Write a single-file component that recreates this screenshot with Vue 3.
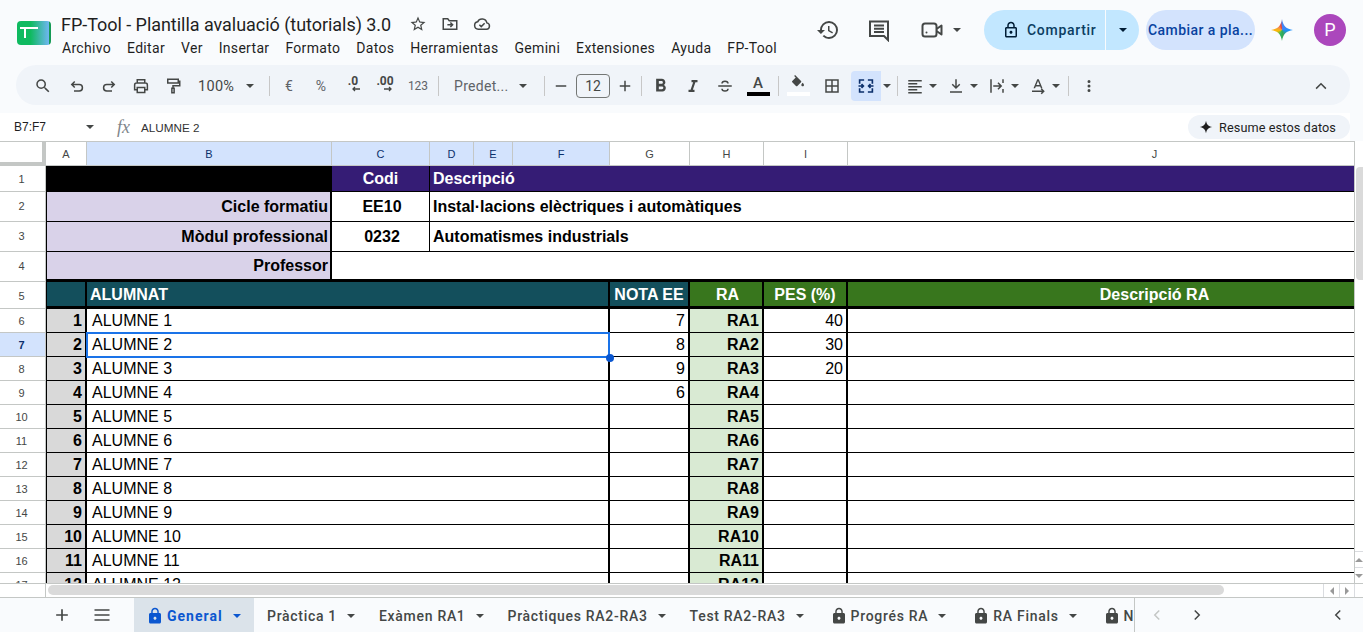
<script setup>
const menus = ["Archivo", "Editar", "Ver", "Insertar", "Formato", "Datos", "Herramientas", "Gemini", "Extensiones", "Ayuda", "FP-Tool"];
const columns = [
	{ name: "A", sel: false },
	{ name: "B", sel: true },
	{ name: "C", sel: true },
	{ name: "D", sel: true },
	{ name: "E", sel: true },
	{ name: "F", sel: true },
	{ name: "G", sel: false },
	{ name: "H", sel: false },
	{ name: "I", sel: false },
	{ name: "J", sel: false },
];
const notes = [7, 8, 9, 6];
const weights = [40, 30, 20];
const students = Array.from({ length: 12 }, (_, i) => ({
	row: i + 6,
	num: i + 1,
	name: "ALUMNE " + (i + 1),
	nota: notes[i] ?? "",
	ra: "RA" + (i + 1),
	pes: weights[i] ?? "",
}));
const tabs = [
	{ name: "Pràctica 1", lock: false },
	{ name: "Exàmen RA1", lock: false },
	{ name: "Pràctiques RA2-RA3", lock: false },
	{ name: "Test RA2-RA3", lock: false },
	{ name: "Progrés RA", lock: true },
	{ name: "RA Finals", lock: true },
	{ name: "Notes", lock: true },
];
</script>

<template>
	<div class="app">
		<svg class="sprite" aria-hidden="true">
			<symbol id="i-search" viewBox="0 0 24 24"><path fill="#444746" d="M15.5 14h-.79l-.28-.27A6.47 6.47 0 0 0 16 9.5 6.5 6.5 0 1 0 9.5 16c1.61 0 3.09-.59 4.23-1.57l.27.28v.79l5 4.99L20.49 19l-4.99-5zm-6 0C7.01 14 5 11.99 5 9.5S7.01 5 9.5 5 14 7.01 14 9.5 11.99 14 9.5 14z" /></symbol>
			<symbol id="i-undo" viewBox="0 0 24 24"><path fill="none" stroke="#444746" stroke-width="2" d="M9 6 5 10l4 4M5 10h10a4.2 4.2 0 0 1 0 8.500H8" /></symbol>
			<symbol id="i-redo" viewBox="0 0 24 24"><path fill="none" stroke="#444746" stroke-width="2" d="m15 6 4 4-4 4m4-4H9a4.2 4.2 0 0 0 0 8.500h7" /></symbol>
			<symbol id="i-print" viewBox="0 0 24 24"><path fill="none" stroke="#444746" stroke-width="2" d="M7 8V3.500h10V8M7 17H3.500v-6.500A2.500 2.500 0 0 1 6 8h12a2.500 2.500 0 0 1 2.500 2.500V17H17M7 14h10v6.500H7z" /></symbol>
			<symbol id="i-paint" viewBox="0 0 24 24"><path fill="none" stroke="#444746" stroke-width="2" d="M5 3h14v5H5zM19 5.500h2V11.500H12V15M10.500 15h3v6h-3z" /></symbol>
			<symbol id="i-minus" viewBox="0 0 24 24"><path fill="#444746" d="M5 11h14v2H5z" /></symbol>
			<symbol id="i-plus" viewBox="0 0 24 24"><path fill="#444746" d="M19 13h-6v6h-2v-6H5v-2h6V5h2v6h6z" /></symbol>
			<symbol id="i-bold" viewBox="2.400 2 20 20"><path fill="#444746" d="M15.600 10.790c.97-.67 1.650-1.770 1.650-2.790 0-2.260-1.750-4-4-4H7v14h7.040c2.090 0 3.710-1.700 3.710-3.790 0-1.520-.86-2.820-2.150-3.420zM10 6.500h3c.83 0 1.500.67 1.500 1.500s-.67 1.500-1.500 1.500h-3v-3zm3.500 9H10v-3h3.500c.83 0 1.500.67 1.500 1.500s-.67 1.500-1.500 1.500z" /></symbol>
			<symbol id="i-italic" viewBox="0 0 24 24"><path fill="#444746" d="M10 4v3h2.210l-3.420 10H6v3h8v-3h-2.210l3.420-10H18V4z" /></symbol>
			<symbol id="i-strike" viewBox="0 0 24 24"><path fill="none" stroke="#444746" stroke-width="2" d="M3 12h18M8 8.500C8 6.500 10 5.500 12 5.500s4 1 4 3M8 15.500c0 2 2 3 4 3s4-1 4-3" /></symbol>
			<symbol id="i-fill" viewBox="0 0 24 24"><path fill="#444746" d="M16.560 8.940 7.620 0 6.210 1.410l2.380 2.380-5.150 5.150a1.490 1.490 0 0 0 0 2.120l5.500 5.500c.29.290.68.440 1.060.44s.77-.15 1.060-.44l5.500-5.500c.59-.58.59-1.530 0-2.120zM19 11.500s-2 2.170-2 3.500c0 1.100.9 2 2 2s2-.9 2-2c0-1.330-2-3.500-2-3.500z" /></symbol>
			<symbol id="i-borders" viewBox="0 0 24 24"><path fill="none" stroke="#444746" stroke-width="2" d="M4 4h16v16H4zM12 4v16M4 12h16" /></symbol>
			<symbol id="i-merge" viewBox="0 0 24 24"><path fill="none" stroke="#0b2f6b" stroke-width="2.200" d="M9.500 4H3.500v5M14.500 4h6v5M9.500 20H3.500v-5M14.500 20h6v-5M2 12h6.500M6 9.500 8.500 12 6 14.500M22 12h-6.500M18 9.500 15.500 12l2.500 2.500" /></symbol>
			<symbol id="i-align" viewBox="0 0 24 24"><path fill="#444746" d="M3 4h18v2H3zM3 8h12v2H3zM3 12h18v2H3zM3 16h12v2H3zM3 20h18v2H3z" /></symbol>
			<symbol id="i-valign" viewBox="0 0 24 24"><path fill="#444746" d="M4 19h16v2H4zM11 3h2v9.200l3.300-3.300 1.400 1.400-5.700 5.700-5.700-5.700 1.400-1.400 3.300 3.300z" /></symbol>
			<symbol id="i-wrap" viewBox="0 0 24 24"><path fill="#444746" d="M3 3h2v18H3zM19 3h2v5h-2zM19 16h2v5h-2zM7 11h8.200l-2.600-2.600L14 7l5 5-5 5-1.400-1.400 2.600-2.600H7z" /></symbol>
			<symbol id="i-rotate" viewBox="0 0 24 24"><path fill="#444746" d="M11 3h2l5 12h-2.100l-1-2.500H9.100l-1 2.500H6zm-1.200 7.700h4.400L12 5.400zM4 18h13.200l-1.600-1.600L17 15l4 4-4 4-1.400-1.400 1.600-1.600H4z" /></symbol>
			<symbol id="i-more" viewBox="0 0 24 24"><path fill="#444746" d="M12 8a2 2 0 1 0 0-4 2 2 0 0 0 0 4zm0 2a2 2 0 1 0 0 4 2 2 0 0 0 0-4zm0 6a2 2 0 1 0 0 4 2 2 0 0 0 0-4z" /></symbol>
			<symbol id="i-up" viewBox="0 0 24 24"><path fill="none" stroke="#444746" stroke-width="2" d="m5.500 15.500 6.500-6.500 6.500 6.500" /></symbol>
			<symbol id="i-lock" viewBox="0 0 24 24"><path d="M18 8h-1V6c0-2.760-2.240-5-5-5S7 3.240 7 6v2H6c-1.100 0-2 .9-2 2v10c0 1.100.9 2 2 2h12c1.100 0 2-.9 2-2V10c0-1.100-.9-2-2-2zm-6 9c-1.100 0-2-.9-2-2s.9-2 2-2 2 .9 2 2-.9 2-2 2zm3.100-9H8.900V6c0-1.710 1.390-3.100 3.100-3.100 1.710 0 3.100 1.390 3.100 3.100v2z" /></symbol>
		</svg>

		<!-- cabecera -->
		<header class="top">
			<svg class="logo" viewBox="0 0 34 24">
				<defs>
					<linearGradient id="logo-g" x1="0" x2="1" y1="0" y2="0">
						<stop offset="0.4" stop-color="#0fba60" />
						<stop offset="0.94" stop-color="#6fb6f2" />
						<stop offset="0.95" stop-color="#159a55" />
					</linearGradient>
				</defs>
				<rect width="34" height="24" rx="4" fill="url(#logo-g)" />
				<path d="M3 7h18M8 7v10" stroke="#fff" stroke-width="2" fill="none" />
			</svg>
			<div class="doc">
				<div class="doc-title">
					<span class="doc-name">FP-Tool - Plantilla avaluació (tutorials) 3.0</span>
					<svg class="doc-ic" viewBox="0 0 24 24"><path fill="#444746" d="M22 9.240l-7.190-.62L12 2 9.190 8.630 2 9.240l5.460 4.730L5.820 21 12 17.270 18.180 21l-1.630-7.030L22 9.240zM12 15.400l-3.760 2.270 1-4.280-3.320-2.880 4.380-.38L12 6.100l1.710 4.040 4.380.38-3.320 2.880 1 4.280L12 15.400z" /></svg>
					<svg class="doc-ic" viewBox="0 0 24 24"><path fill="none" stroke="#444746" stroke-width="2" d="M3 19V5h6l2 2.500h10V19zM8.500 13h7M12.500 10l3 3-3 3" /></svg>
					<svg class="doc-ic" viewBox="0 0 24 24"><path fill="none" stroke="#444746" stroke-width="2" d="M7 19a5 5 0 0 1-.8-9.900A6.500 6.500 0 0 1 18.500 10.500 4.300 4.300 0 0 1 18 19zM8.500 13l2.500 2.500 4.500-4.500" /></svg>
				</div>
				<nav class="menu">
					<span v-for="m in menus" :key="m">{{ m }}</span>
				</nav>
			</div>
			<div class="actions">
				<svg class="act-ic" viewBox="0 0 24 24"><path fill="#444746" d="M13 3a9 9 0 0 0-9 9H1l3.890 3.890.07.14L9 12H6c0-3.870 3.130-7 7-7s7 3.130 7 7-3.130 7-7 7c-1.930 0-3.680-.79-4.940-2.060l-1.420 1.420A8.954 8.954 0 0 0 13 21a9 9 0 0 0 0-18zm-1 5v5l4.280 2.540.72-1.210-3.500-2.080V8H12z" /></svg>
				<svg class="act-ic comment" viewBox="0 0 24 24"><path fill="none" stroke="#444746" stroke-width="2" d="M3 3.500h18V22l-4-4H3zM7 7.500h10M7 10.800h10M7 14h10" /></svg>
				<svg class="act-ic video" viewBox="0 0 24 24"><rect x="2.500" y="5.500" width="14" height="13" rx="2.500" fill="none" stroke="#444746" stroke-width="2" /><path fill="none" stroke="#444746" stroke-width="2" stroke-linejoin="round" d="m16.500 11 5-3.500v9l-5-3.500" /><circle cx="6.500" cy="14.500" r="1" fill="#444746" /></svg>
				<i class="caret video-caret"></i>
				<div class="share">
					<div class="share-main">
						<svg class="share-lock" viewBox="0 0 24 24"><path fill="#001d35" d="M18 8h-1V6c0-2.760-2.240-5-5-5S7 3.240 7 6v2H6c-1.100 0-2 .9-2 2v10c0 1.100.9 2 2 2h12c1.100 0 2-.9 2-2V10c0-1.100-.9-2-2-2zM9 6c0-1.660 1.340-3 3-3s3 1.340 3 3v2H9V6zm9 14H6V10h12v10zm-6-3c1.100 0 2-.9 2-2s-.9-2-2-2-2 .9-2 2 .9 2 2 2z" /></svg>
						<span>Compartir</span>
					</div>
					<div class="share-drop"><i class="caret dark"></i></div>
				</div>
				<div class="upgrade">Cambiar a pla...</div>
				<div class="spark"></div>
				<div class="avatar">P</div>
			</div>
		</header>

		<!-- barra de herramientas -->
		<div class="toolbar">
			<span class="tb"><svg class="ic"><use href="#i-search" /></svg></span>
			<span class="tb undo"><svg class="ic"><use href="#i-undo" /></svg></span>
			<span class="tb"><svg class="ic"><use href="#i-redo" /></svg></span>
			<span class="tb"><svg class="ic"><use href="#i-print" /></svg></span>
			<span class="tb"><svg class="ic"><use href="#i-paint" /></svg></span>
			<span class="tb-zoom">100%<i class="caret"></i></span>
			<i class="sep zoom-sep"></i>
			<span class="tb txt">€</span>
			<span class="tb txt">%</span>
			<span class="tb dec"><b>.0</b><svg viewBox="0 0 10 6" class="dec-arrow"><path d="M9 3H2M4 1 2 3l2 2" fill="none" stroke="#444746" stroke-width="1.300" /></svg></span>
			<span class="tb dec"><b>.00</b><svg viewBox="0 0 10 6" class="dec-arrow"><path d="M1 3h7M6 1l2 2-2 2" fill="none" stroke="#444746" stroke-width="1.300" /></svg></span>
			<span class="tb txt small">123</span>
			<i class="sep sep3"></i>
			<span class="tb-font">Predet...<i class="caret"></i></span>
			<i class="sep font-sep"></i>
			<span class="tb minus"><svg class="ic"><use href="#i-minus" /></svg></span>
			<span class="size">12</span>
			<span class="tb plus"><svg class="ic"><use href="#i-plus" /></svg></span>
			<i class="sep sep1"></i>
			<span class="tb"><svg class="ic"><use href="#i-bold" /></svg></span>
			<span class="tb"><svg class="ic"><use href="#i-italic" /></svg></span>
			<span class="tb"><svg class="ic"><use href="#i-strike" /></svg></span>
			<span class="tb color"><span class="letter">A</span><i class="bar black-bar"></i></span>
			<i class="sep sep4"></i>
			<span class="tb color fill"><svg class="ic-sm"><use href="#i-fill" /></svg><i class="bar white-bar"></i></span>
			<span class="tb borders"><svg class="ic"><use href="#i-borders" /></svg></span>
			<span class="tb-merge"><svg class="ic"><use href="#i-merge" /></svg></span>
			<span class="merge-caret"><i class="caret"></i></span>
			<i class="sep sep4"></i>
			<span class="drop d1"><svg class="ic"><use href="#i-align" /></svg><i class="caret"></i></span>
			<span class="drop"><svg class="ic"><use href="#i-valign" /></svg><i class="caret"></i></span>
			<span class="drop"><svg class="ic"><use href="#i-wrap" /></svg><i class="caret"></i></span>
			<span class="drop"><svg class="ic"><use href="#i-rotate" /></svg><i class="caret"></i></span>
			<i class="sep sep7"></i>
			<span class="tb more"><svg class="ic"><use href="#i-more" /></svg></span>
			<span class="tb collapse"><svg class="ic"><use href="#i-up" /></svg></span>
		</div>

		<!-- barra de formulas -->
		<div class="formula">
			<span class="range">B7:F7</span>
			<i class="caret range-caret"></i>
			<span class="fx">fx</span>
			<span class="value">ALUMNE 2</span>
			<span class="chip">
				<svg viewBox="0 0 20 20" class="chip-ic"><path fill="#1f1f1f" d="M10 1c.9 5.500 3.500 8.100 9 9-5.500.9-8.100 3.500-9 9-.9-5.500-3.500-8.100-9-9 5.500-.9 8.100-3.500 9-9z" /></svg>
				Resume estos datos
			</span>
		</div>

		<!-- hoja -->
		<div class="sheet-wrap">
			<div class="sheet">
				<div class="grid">
					<div class="corner"></div>
					<div v-for="c in columns" :key="c.name" class="col-head" :class="{ sel: c.sel }">{{ c.name }}</div>

					<div class="row-head">1</div>
					<div class="cell black s2"></div>
					<div class="cell purple bold center">Codi</div>
					<div class="cell purple bold s7">Descripció</div>

					<div class="row-head tall">2</div>
					<div class="cell lilac edge bold right thick label s2">Cicle formatiu</div>
					<div class="cell bold center code">EE10</div>
					<div class="cell bold s7">Instal·lacions elèctriques i automàtiques</div>

					<div class="row-head tall">3</div>
					<div class="cell lilac edge bold right thick label s2">Mòdul professional</div>
					<div class="cell bold center code">0232</div>
					<div class="cell bold s7">Automatismes industrials</div>

					<div class="row-head tall">4</div>
					<div class="cell lilac edge bold right thick label under s2">Professor</div>
					<div class="cell under s8"></div>

					<div class="row-head low">5</div>
					<div class="cell teal edge thick under"></div>
					<div class="cell teal bold thick under low s5">ALUMNAT</div>
					<div class="cell teal bold center thick under low">NOTA EE</div>
					<div class="cell green bold center thick under low ra-head">RA</div>
					<div class="cell green bold center thick under low">PES (%)</div>
					<div class="cell green bold center under low">Descripció RA</div>

					<template v-for="s in students" :key="s.row">
						<div class="row-head" :class="{ sel: s.row === 7 }">{{ s.row }}</div>
						<div class="cell gray edge bold right thick">{{ s.num }}</div>
						<div class="cell name thick s5">{{ s.name }}</div>
						<div class="cell right thick">{{ s.nota }}</div>
						<div class="cell ra bold right thick">{{ s.ra }}</div>
						<div class="cell right thick">{{ s.pes }}</div>
						<div class="cell"></div>
					</template>
				</div>
				<div class="selection"><i class="handle"></i></div>
			</div>
			<div class="v-scroll">
				<div class="v-thumb"></div>
				<div class="v-btns">
					<span class="v-btn"><i class="tri up"></i></span>
					<span class="v-btn"><i class="tri down"></i></span>
				</div>
			</div>
		</div>
		<div class="h-scroll">
			<div class="h-corner"></div>
			<div class="h-track"><div class="h-thumb"></div></div>
			<div class="h-btns">
				<span class="h-btn"><i class="tri left"></i></span>
				<span class="h-btn"><i class="tri right"></i></span>
			</div>
		</div>

		<!-- pestañas -->
		<footer class="tabbar">
			<svg class="tab-add" viewBox="0 0 24 24"><path fill="#444746" d="M19 13h-6v6h-2v-6H5v-2h6V5h2v6h6z" /></svg>
			<svg class="tab-all" viewBox="0 0 24 24"><path fill="#444746" d="M3 5h18v2H3zM3 11h18v2H3zM3 17h18v2H3z" /></svg>
			<div class="tabs">
				<div class="tab active">
					<svg class="tab-lock blue"><use href="#i-lock" /></svg>
					<span>General</span>
					<i class="caret blue"></i>
				</div>
				<div v-for="t in tabs" :key="t.name" class="tab" :class="{ locked: t.lock }">
					<svg v-if="t.lock" class="tab-lock"><use href="#i-lock" /></svg>
					<span>{{ t.name }}</span>
					<i class="caret"></i>
				</div>
			</div>
			<svg class="nav prev" viewBox="0 0 24 24"><path fill="none" stroke="#c4c7c5" stroke-width="2" d="m15 6-6 6 6 6" /></svg>
			<svg class="nav next" viewBox="0 0 24 24"><path fill="none" stroke="#444746" stroke-width="2" d="m9 6 6 6-6 6" /></svg>
			<svg class="nav side" viewBox="0 0 24 24"><path fill="none" stroke="#444746" stroke-width="2" d="m15 6-6 6 6 6" /></svg>
		</footer>
	</div>
</template>

<style scoped>
.app {
	width: 1363px;
	height: 632px;
	overflow: hidden;
	display: flex;
	flex-direction: column;
	background-color: #f9fbfd;
	font-family: Roboto, "Liberation Sans", sans-serif;
	color: #1f1f1f;
}

.sprite {
	position: absolute;
	width: 0;
	height: 0;
}

i {
	display: block;
	font-style: normal;
}

.caret {
	width: 0;
	height: 0;
	flex: none;
	border-left: 4px solid transparent;
	border-right: 4px solid transparent;
	border-top: 4px solid #444746;
}

.caret.dark {
	border-top-color: #001d35;
}

.caret.blue {
	border-top-color: #0b57d0;
}

/* cabecera */
.top {
	height: 65px;
	flex: none;
	display: flex;
	padding-left: 17px;
}

.logo {
	width: 34px;
	height: 24px;
	margin-top: 21px;
	flex: none;
}

.doc {
	margin-left: 10px;
	padding-top: 12px;
}

.doc-title {
	display: flex;
	align-items: center;
	height: 24px;
}

.doc-name {
	font-size: 18px;
	letter-spacing: -0.04px;
	width: 348px;
	white-space: nowrap;
}

.doc-ic {
	width: 18px;
	height: 18px;
	margin-right: 14px;
	flex: none;
}

.menu {
	display: flex;
	gap: 16px;
	margin-top: 2px;
	margin-left: 1px;
	font-size: 14px;
	letter-spacing: 0.31px;
	line-height: 20px;
}

.actions {
	margin-left: auto;
	padding-top: 10px;
	padding-right: 17px;
	display: flex;
	align-items: flex-start;
}

.act-ic {
	width: 24px;
	height: 24px;
	margin-top: 8px;
	flex: none;
}

.comment {
	margin-left: 27px;
}

.video {
	margin-left: 29px;
}

.video-caret {
	margin: 18px 0 0 9px;
}

.share {
	margin-left: 23px;
	width: 155px;
	height: 40px;
	display: flex;
	flex: none;
	border-radius: 20px;
	overflow: hidden;
	background-color: #c2e7ff;
	color: #001d35;
}

.share-main {
	width: 122px;
	display: flex;
	align-items: center;
	padding-left: 18px;
	gap: 7px;
	font-size: 14px;
	font-weight: 500;
	letter-spacing: 0.7px;
	color: #0b3d62;
	box-sizing: border-box;
	border-right: 1px solid #f9fbfd;
}

.share-lock {
	width: 18px;
	height: 18px;
}

.share-drop {
	flex: 1;
	display: flex;
	align-items: center;
	justify-content: center;
}

.upgrade {
	margin-left: 7px;
	width: 109px;
	height: 40px;
	flex: none;
	border-radius: 20px;
	background-color: #d3e3fd;
	color: #0842a0;
	font-size: 14px;
	font-weight: 500;
	letter-spacing: 0.45px;
	line-height: 40px;
	text-align: center;
	white-space: nowrap;
}

.spark {
	width: 22px;
	height: 22px;
	margin: 9px 0 0 16px;
	flex: none;
	background: conic-gradient(#4285f4 0 60deg, #1e90ff 90deg, #34a853 170deg, #2fb566 200deg, #fbbc04 260deg, #f28b50 310deg, #ea4335 350deg, #4285f4 360deg);
	clip-path: path("M11 0C11.800 6.500 15.500 10.200 22 11 15.500 11.800 11.800 15.500 11 22 10.200 15.500 6.500 11.800 0 11 6.500 10.200 10.200 6.500 11 0Z");
}

.avatar {
	width: 32px;
	height: 32px;
	margin: 4px 0 0 21px;
	flex: none;
	border-radius: 50%;
	background-color: #ab47bc;
	color: #fff;
	font-size: 18px;
	line-height: 32px;
	text-align: center;
}

/* toolbar */
.toolbar {
	height: 40px;
	flex: none;
	margin: 0 13px 0 16px;
	padding: 1px 0 0 11px;
	box-sizing: border-box;
	display: flex;
	align-items: center;
	border-radius: 20px;
	background-color: #f0f4f9;
	color: #444746;
}

.tb {
	width: 32px;
	height: 28px;
	flex: none;
	display: flex;
	align-items: center;
	justify-content: center;
}

.ic {
	width: 18px;
	height: 18px;
	flex: none;
}

.ic-sm {
	width: 16px;
	height: 16px;
	flex: none;
}

.undo {
	margin-left: 2px;
}

.tb-zoom {
	width: 72px;
	flex: none;
	box-sizing: border-box;
	padding: 1px 0 0 9px;
	display: flex;
	align-items: center;
	font-size: 14.5px;
	letter-spacing: 0.3px;
}

.tb-zoom .caret {
	margin-left: 12px;
}

.sep {
	width: 1px;
	height: 20px;
	flex: none;
	background-color: #c7c7c7;
}

.zoom-sep {
	margin: 0 3px 0 8px;
}

.sep3 {
	margin-left: 3px;
}

.sep1 {
	margin: 0 3px 0 1px;
}

.sep4 {
	margin: 0 3px 0 4px;
}

.sep7 {
	margin: 0 4px 0 8px;
}

.txt {
	font-size: 14px;
	color: #5f6368;
}

.small {
	font-size: 12px;
	width: 34px;
}

.dec {
	font-size: 12px;
	display: block;
	text-align: center;
	line-height: 18px;
}

.dec b {
	display: block;
	font-weight: 700;
	color: #444746;
}

.dec-arrow {
	display: block;
	width: 10px;
	height: 6px;
	margin: -4px 0 0 14px;
}

.tb-font {
	width: 93px;
	flex: none;
	box-sizing: border-box;
	padding-left: 15px;
	display: flex;
	align-items: center;
	font-size: 14px;
	letter-spacing: 0.3px;
	color: #5f6368;
}

.tb-font .caret {
	margin-left: 10px;
}

.font-sep {
	margin-left: 12px;
}

.minus {
	width: 31px;
}

.plus {
	width: 30px;
}

.size {
	width: 34px;
	height: 24px;
	flex: none;
	box-sizing: border-box;
	border: 1px solid #747775;
	border-radius: 4px;
	font-size: 14px;
	line-height: 22px;
	text-align: center;
}

.color {
	flex-direction: column;
	margin-left: 1px;
}

.letter {
	font-size: 15px;
	font-weight: 500;
	line-height: 14px;
}

.bar {
	width: 23px;
	height: 4px;
	margin-top: 2px;
}

.black-bar {
	background-color: #000;
}

.white-bar {
	background-color: #fff;
	margin-top: 1px;
}

.fill {
	margin-left: 0;
}

.borders {
	margin-left: 2px;
}

.tb-merge {
	width: 30px;
	height: 30px;
	flex: none;
	margin-left: 3px;
	display: flex;
	align-items: center;
	justify-content: center;
	border-radius: 4px 0 0 4px;
	background-color: #d3e3fd;
}

.merge-caret {
	width: 12px;
	flex: none;
	display: flex;
	justify-content: center;
}

.drop {
	flex: none;
	display: flex;
	align-items: center;
	gap: 5px;
	margin-left: 10px;
}

.drop.d1 {
	margin-left: 5px;
}

.collapse {
	margin-left: auto;
	margin-right: 13px;
}

/* formula */
.formula {
	height: 28px;
	flex: none;
	margin: 8px 13px 0 0;
	display: flex;
	align-items: center;
	background-color: #fff;
	font-size: 12px;
}

.range {
	width: 72px;
	padding-left: 14px;
	box-sizing: border-box;
	font-family: "Liberation Sans", Arial, sans-serif;
}

.range-caret {
	margin-left: 14px;
}

.fx {
	margin-left: 23px;
	width: 24px;
	font-family: "Liberation Serif", serif;
	font-style: italic;
	font-size: 18px;
	color: #80868b;
}

.value {
	font-family: "Liberation Sans", Arial, sans-serif;
	font-size: 11.7px;
	color: #333;
}

.chip {
	margin-left: auto;
	width: 162px;
	height: 24px;
	box-sizing: border-box;
	padding-left: 11px;
	display: flex;
	align-items: center;
	gap: 6px;
	border-radius: 12px;
	background-color: #f0f4f9;
	font-size: 12.7px;
	letter-spacing: 0.1px;
}

.chip-ic {
	width: 14px;
	height: 14px;
}

/* hoja */
.sheet-wrap {
	height: 442px;
	flex: none;
	display: flex;
	background-color: #fff;
}

.sheet {
	position: relative;
	width: 1354px;
	overflow: hidden;
}

.grid {
	display: grid;
	grid-template-columns: 46px 41px 245px 98px 44px 39px 97px 80px 74px 84px 614px;
	grid-template-rows: 25px 26px 30px 30px 30px 27px repeat(12, 24px);
	font-family: "Liberation Sans", Arial, sans-serif;
	font-size: 16px;
	color: #000;
}

.corner {
	box-sizing: border-box;
	border-top: 1px solid #c4c7c5;
	border-right: 4px solid #c4c7c5;
	border-bottom: 4px solid #c4c7c5;
}

.col-head {
	box-sizing: border-box;
	display: flex;
	align-items: center;
	justify-content: center;
	border-top: 1px solid #c4c7c5;
	border-right: 1px solid #c4c7c5;
	border-bottom: 1px solid #c4c7c5;
	font-size: 11px;
	color: #444746;
}

.col-head.sel {
	background-color: #d3e3fd;
	color: #0b2f6b;
}

.row-head {
	box-sizing: border-box;
	display: flex;
	align-items: center;
	justify-content: center;
	padding-right: 2px;
	border-right: 1px solid #c4c7c5;
	border-bottom: 1px solid #c4c7c5;
	font-size: 11px;
	color: #444746;
}

.row-head.tall {
	padding-bottom: 2px;
}

.row-head.sel {
	background-color: #d3e3fd;
	color: #0b2f6b;
	font-weight: 700;
}

.cell {
	box-sizing: border-box;
	display: flex;
	align-items: center;
	padding: 0 3px;
	overflow: hidden;
	white-space: nowrap;
	border-right: 1px solid #000;
	border-bottom: 1px solid #000;
}

.edge {
	border-left: 1px solid #000;
}

.s2 {
	grid-column: span 2;
}

.s5 {
	grid-column: span 5;
}

.s7 {
	grid-column: span 7;
}

.s8 {
	grid-column: span 8;
}

.bold {
	font-weight: 700;
}

.center {
	justify-content: center;
}

.right {
	justify-content: flex-end;
}

.thick {
	border-right-width: 2px;
}

.under {
	border-bottom-width: 3px;
}

.low {
	padding-top: 2px;
}

.black {
	background-color: #000;
}

.purple {
	background-color: #351c75;
	color: #fff;
}

.lilac {
	background-color: #d9d2e9;
}

.label {
	padding-right: 2px;
}

.code {
	padding-left: 6px;
}

.teal {
	background-color: #134f5c;
	color: #fff;
}

.green {
	background-color: #38761d;
	color: #fff;
}

.ra-head {
	padding-left: 6px;
}

.gray {
	background-color: #d9d9d9;
}

.ra {
	background-color: #d9ead3;
}

.name {
	padding-left: 5px;
}

.selection {
	position: absolute;
	left: 86px;
	top: 191px;
	width: 524px;
	height: 26px;
	box-sizing: border-box;
	border: 2px solid #1a73e8;
}

.handle {
	position: absolute;
	right: -6px;
	bottom: -6px;
	width: 8px;
	height: 8px;
	border-radius: 50%;
	background-color: #0b57d0;
}

.v-scroll {
	flex: 1;
	position: relative;
	box-sizing: border-box;
	border-left: 1px solid #c4c7c5;
}

.v-thumb {
	position: absolute;
	left: 1px;
	top: 26px;
	width: 7px;
	height: 113px;
	border-radius: 4px 0 0 4px;
	background-color: #dadada;
}

.v-btns {
	position: absolute;
	left: 0;
	right: 0;
	bottom: 0;
	display: flex;
	flex-direction: column;
}

.v-btn {
	height: 16px;
	box-sizing: border-box;
	display: flex;
	align-items: center;
	justify-content: center;
	border-top: 1px solid #dadce0;
}

.tri {
	width: 0;
	height: 0;
	border: 4px solid transparent;
}

.tri.up {
	border-bottom-color: #999;
	border-top-width: 0;
}

.tri.down {
	border-top-color: #999;
	border-bottom-width: 0;
}

.tri.left {
	border-right-color: #999;
	border-left-width: 0;
}

.tri.right {
	border-left-color: #999;
	border-right-width: 0;
}

.h-scroll {
	height: 15px;
	flex: none;
	display: flex;
	box-sizing: border-box;
	border-top: 1px solid #c4c7c5;
	border-bottom: 1px solid #c4c7c5;
	background-color: #fff;
}

.h-corner {
	width: 46px;
	flex: none;
	box-sizing: border-box;
	border-right: 1px solid #c4c7c5;
}

.h-track {
	flex: 1;
	padding: 1px 2px;
}

.h-thumb {
	width: 1176px;
	height: 10px;
	border-radius: 5px;
	background-color: #dadada;
}

.h-btns {
	width: 40px;
	flex: none;
	display: flex;
	padding-right: 8px;
	box-sizing: border-box;
}

.h-btn {
	width: 16px;
	display: flex;
	align-items: center;
	justify-content: center;
	box-sizing: border-box;
	border-left: 1px solid #dadce0;
}

.h-btn:last-child {
	border-right: 1px solid #dadce0;
}

/* pestañas */
.tabbar {
	flex: 1;
	display: flex;
	align-items: stretch;
	font-size: 14px;
	font-weight: 500;
	letter-spacing: 0.7px;
	color: #444746;
}

.tab-add,
.tab-all {
	width: 20px;
	height: 20px;
	align-self: center;
	flex: none;
}

.tab-add {
	margin-left: 52px;
}

.tab-all {
	margin-left: 20px;
	margin-right: 22px;
}

.tabs {
	width: 1001px;
	flex: none;
	display: flex;
	overflow: hidden;
	box-sizing: border-box;
	border-right: 1px solid #c4c7c5;
}

.tab {
	flex: none;
	display: flex;
	align-items: center;
	padding: 2px 11px 0 13px;
	white-space: nowrap;
}

.tab .caret {
	margin-left: 10px;
}

.tab.locked {
	margin-left: 2px;
}

.tab.active {
	width: 120px;
	box-sizing: border-box;
	padding-left: 12px;
	background-color: #dbe3ea;
	color: #0b57d0;
	font-weight: 700;
	letter-spacing: 1px;
}

.tab-lock {
	width: 18px;
	height: 18px;
	margin-right: 3px;
	fill: #444746;
	flex: none;
}

.tab-lock.blue {
	fill: #0b57d0;
}

.nav {
	width: 18px;
	height: 18px;
	align-self: center;
	flex: none;
}

.prev {
	margin-left: 13px;
}

.next {
	margin-left: 22px;
}

.side {
	margin-left: 123px;
}
</style>
